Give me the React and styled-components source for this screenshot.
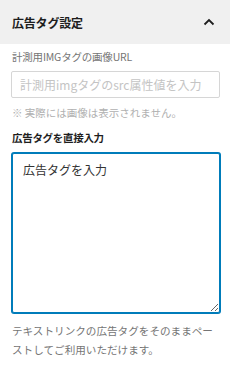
import React from "react";
import styled, { createGlobalStyle } from "styled-components";

const Global = createGlobalStyle`
  html, body { margin: 0; padding: 0; background: #fff; }
  body { font-family: "Noto Sans CJK JP", "Noto Sans", sans-serif; }
  * { box-sizing: border-box; }
`;

const Panel = styled.div`
  width: 230px;
  background: #fff;
`;

const Header = styled.div`
  height: 44px;
  background: #f0f0f0;
  display: flex;
  align-items: center;
  justify-content: space-between;
  padding: 0 12px 0 12px;
`;

const Title = styled.h2`
  margin: 0;
  font-size: 12px;
  font-weight: 700;
  color: #1e1e1e;
  letter-spacing: -0.2px;
`;

const Body = styled.div`
  padding: 5px 11px 0 11px;
  display: flex;
  flex-direction: column;
`;

const Label = styled.label`
  font-size: 10.5px;
  line-height: 16px;
  color: ${(p) => (p.$strong ? "#1e1e1e" : "#757575")};
  font-weight: ${(p) => (p.$strong ? 600 : 400)};
  letter-spacing: ${(p) => (p.$strong ? "-0.3px" : "-0.2px")};
  margin: 0 0 ${(p) => (p.$strong ? 7 : 6)}px 1px;
`;

const Input = styled.input`
  width: 209px;
  height: 27px;
  border: 1px solid #d6d6d6;
  border-radius: 2px;
  padding: 0 8px;
  font-family: inherit;
  font-size: 12px;
  color: #333;
  outline: none;
  &::placeholder { color: #c4c4c4; }
`;

const Note = styled.p`
  margin: 7px 0 0 1px;
  font-size: 10.5px;
  line-height: 16px;
  color: #b0b0b0;
`;

const Field = styled.div`
  display: flex;
  flex-direction: column;
  margin-top: ${(p) => p.$mt || 0}px;
`;

const TextArea = styled.textarea`
  width: 208px;
  height: 160px;
  margin-left: 1px;
  border: 1px solid #007cba;
  box-shadow: 0 0 0 1px #007cba;
  border-radius: 2px;
  padding: 7px 10px;
  font-family: inherit;
  font-size: 12px;
  line-height: 18px;
  color: #333;
  outline: none;
  resize: vertical;
`;

const Help = styled.p`
  margin: 8px 0 0 1px;
  font-size: 10.6px;
  line-height: 19px;
  color: #757575;
`;

const Chevron = () => (
  <svg width="12" height="8" viewBox="0 0 12 8" style={{ marginRight: 3 }}>
    <path d="M1.5 6.5 L6 2 L10.5 6.5" fill="none" stroke="#1e1e1e" strokeWidth="1.8" />
  </svg>
);

export default function App() {
  return (
    <Panel>
      <Global />
      <Header>
        <Title>広告タグ設定</Title>
        <Chevron />
      </Header>
      <Body>
        <Field>
          <Label>計測用IMGタグの画像URL</Label>
          <Input placeholder="計測用imgタグのsrc属性値を入力" />
          <Note>※ 実際には画像は表示されません。</Note>
        </Field>
        <Field $mt={9}>
          <Label $strong>広告タグを直接入力</Label>
          <TextArea defaultValue="広告タグを入力" />
          <Help>テキストリンクの広告タグをそのままペーストしてご利用いただけます。</Help>
        </Field>
      </Body>
    </Panel>
  );
}
